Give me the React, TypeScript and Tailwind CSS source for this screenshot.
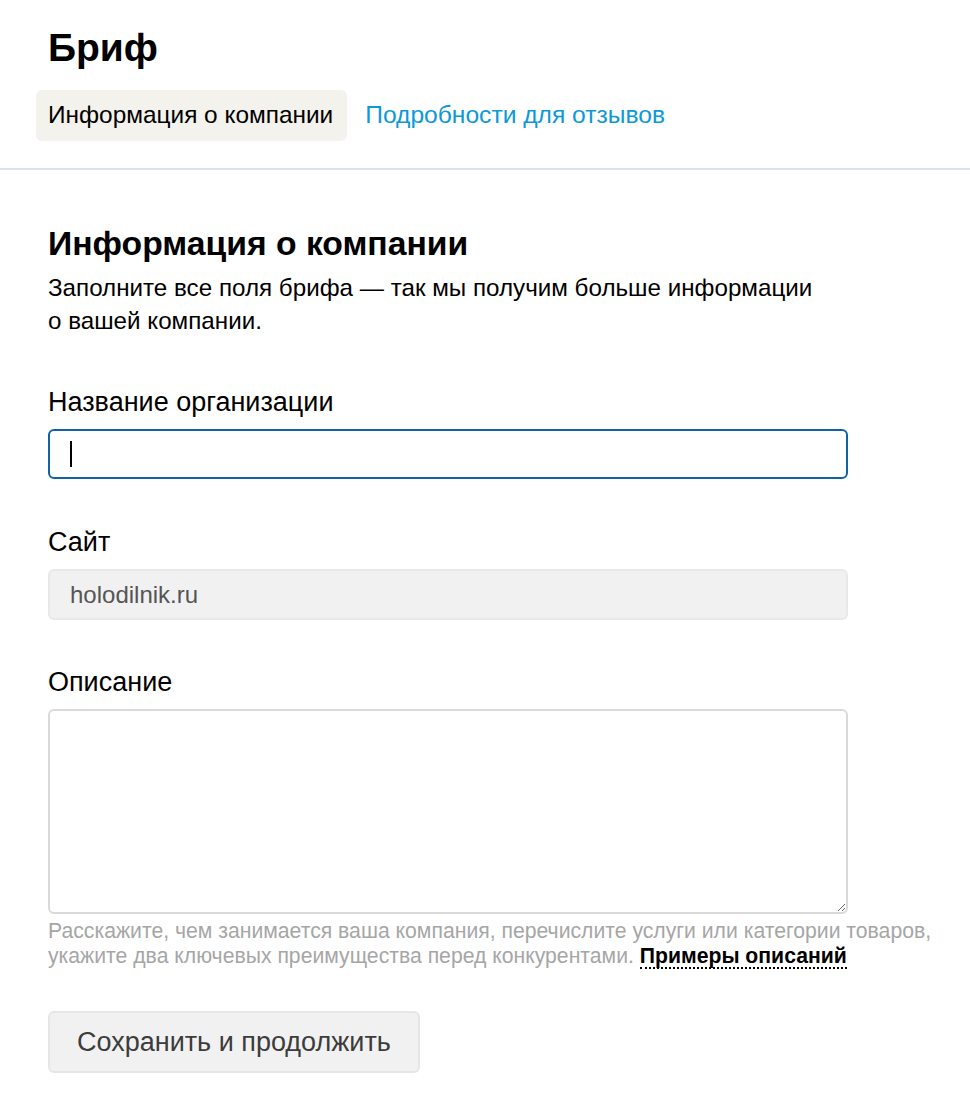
import { useState } from 'react';

const font = { fontFamily: '"Liberation Sans", Arial, sans-serif' };

function Label({ children }: { children: React.ReactNode }) {
  return <label className="block text-[27px] leading-[30px] text-black mb-[12px]">{children}</label>;
}

export default function App() {
  const [name, setName] = useState('');
  const [desc, setDesc] = useState('');

  return (
    <div className="min-h-screen bg-white text-black" style={font}>
      <header className="border-b-2 border-[#d9e2ea]">
        <div className="pl-[48px] pt-[28px]">
          <h1 className="text-[39px] leading-[40px] font-bold">Бриф</h1>
        </div>
        <nav className="flex items-center gap-[6px] pl-[36px] pt-[22px] pb-[27px]">
          <span className="rounded-[6px] bg-[#f3f2ec] pl-[12px] pr-[14px] h-[51px] flex items-center text-[24.4px]">
            Информация о компании
          </span>
          <a className="px-[12px] h-[51px] flex items-center text-[24.6px] text-[#0b99d8]" href="#">
            Подробности для отзывов
          </a>
        </nav>
      </header>

      <main className="pl-[48px] pr-[122px] pt-[55px] pb-[22px]">
        <h2 className="text-[33.7px] leading-[36px] font-bold">Информация о компании</h2>
        <p className="mt-[10px] text-[24.2px] leading-[33px]">
          Заполните все поля брифа — так мы получим больше информации
          <br />о вашей компании.
        </p>

        <div className="mt-[50px]">
          <Label>Название организации</Label>
          <div className="relative">
            <input
              autoFocus
              value={name}
              onChange={e => setName(e.target.value)}
              className="h-[50px] w-full rounded-[6px] border-2 border-[#0f62a4] px-[20px] text-[24px] outline-none caret-black"
            />
            {name === '' && (
              <span className="pointer-events-none absolute left-[22px] top-[12px] h-[26px] w-[2px] bg-black" />
            )}
          </div>
        </div>

        <div className="mt-[48px]">
          <Label>Сайт</Label>
          <input
            disabled
            value="holodilnik.ru"
            className="h-[51px] w-full rounded-[6px] border-2 border-[#e8e8e8] bg-[#f1f1f1] px-[20px] text-[24px] text-[#555]"
          />
        </div>

        <div className="mt-[47px]">
          <Label>Описание</Label>
          <textarea
            value={desc}
            onChange={e => setDesc(e.target.value)}
            className="block h-[205px] w-full rounded-[6px] border-2 border-[#dadada] px-[20px] py-[12px] text-[24px] outline-none"
          />
          <p className="mt-[4px] w-[905px] text-[21.2px] leading-[25px] text-[#a6a6a6]">
            Расскажите, чем занимается ваша компания, перечислите услуги или категории товаров,
            <br />
            укажите два ключевых преимущества перед конкурентами.{' '}
            <a href="#" className="font-bold text-black border-b-2 border-dotted border-black">
              Примеры описаний
            </a>
          </p>
        </div>

        <button className="mt-[43px] h-[62px] rounded-[6px] border-2 border-[#e6e6e6] bg-[#f1f1f1] px-[27px] text-[27px] text-[#3c3c3c]">
          Сохранить и продолжить
        </button>
      </main>
    </div>
  );
}
